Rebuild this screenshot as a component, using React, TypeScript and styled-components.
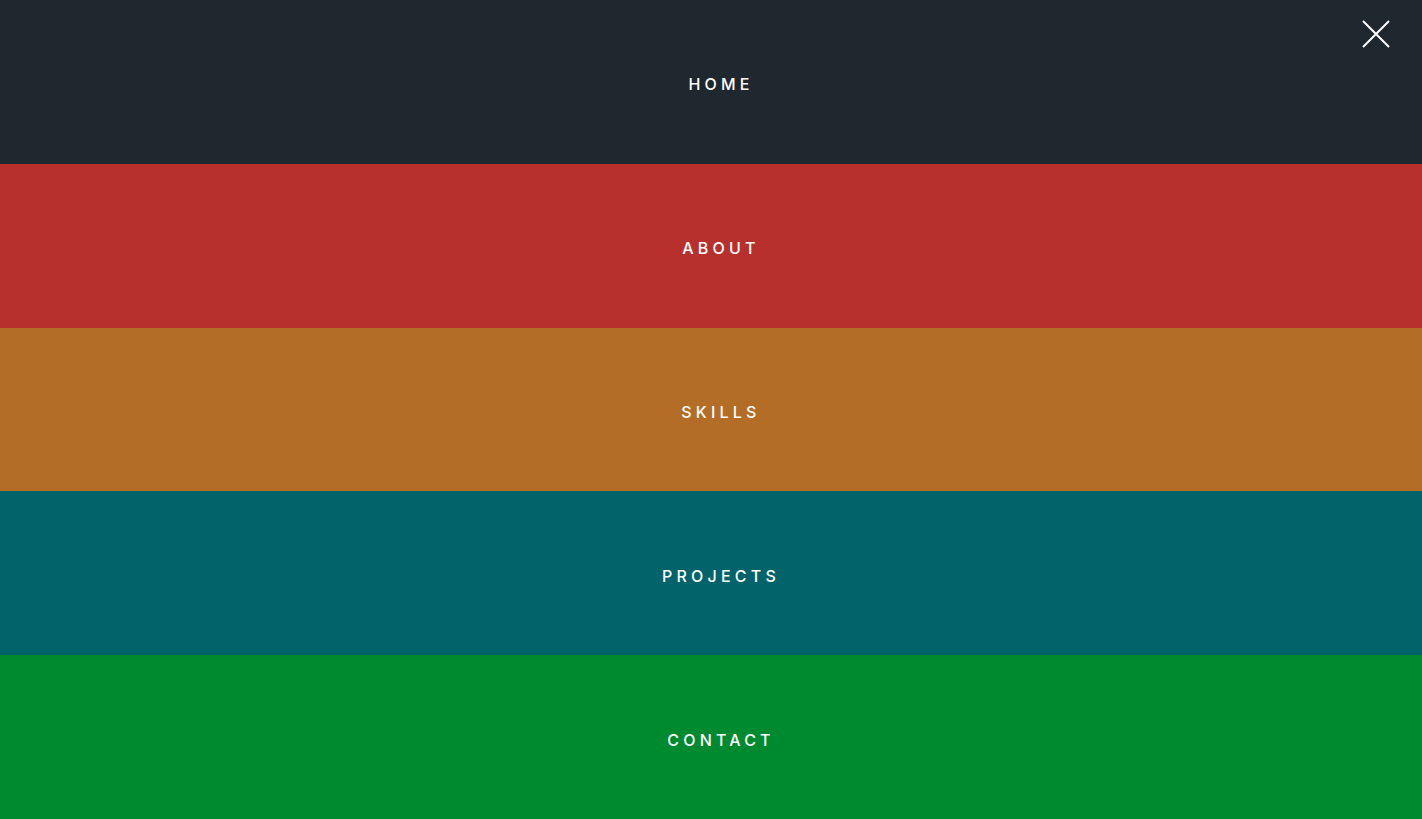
import React from "react";
import styled, { createGlobalStyle } from "styled-components";

const Global = createGlobalStyle`
  html, body { margin: 0; padding: 0; height: 100%; }
  body { font-family: "Inter", "Lato", sans-serif; overflow: hidden; }
  #root { height: 100%; }
`;

const Menu = styled.nav`
  position: relative;
  height: 100vh;
  display: grid;
  grid-template-rows: repeat(5, 1fr);
`;

const Band = styled.a<{ $bg: string }>`
  display: flex;
  align-items: center;
  justify-content: center;
  padding: 5px 0 0 20px;
  background: ${(p) => p.$bg};
  color: #ffffff;
  text-decoration: none;
  font-family: "Inter", sans-serif;
  font-weight: 500;
  font-size: 16px;
  letter-spacing: 4.2px;
  text-transform: uppercase;
`;

const Close = styled.button`
  position: absolute;
  top: 20px;
  right: 32px;
  width: 28px;
  height: 28px;
  padding: 0;
  border: 0;
  background: transparent;
  cursor: pointer;
  display: flex;
`;

const items = [
  { label: "Home", bg: "#1f272f" },
  { label: "About", bg: "#b8302e" },
  { label: "Skills", bg: "#b36d26" },
  { label: "Projects", bg: "#02646a" },
  { label: "Contact", bg: "#008a2f" },
];

export default function App() {
  return (
    <>
      <Global />
      <Menu>
        {items.map((it) => (
          <Band key={it.label} href="#" $bg={it.bg}>
            {it.label}
          </Band>
        ))}
        <Close aria-label="Close">
          <svg width="28" height="28" viewBox="0 0 28 28">
            <path d="M1 1 L27 27 M27 1 L1 27" stroke="#fff" strokeWidth="2" />
          </svg>
        </Close>
      </Menu>
    </>
  );
}
